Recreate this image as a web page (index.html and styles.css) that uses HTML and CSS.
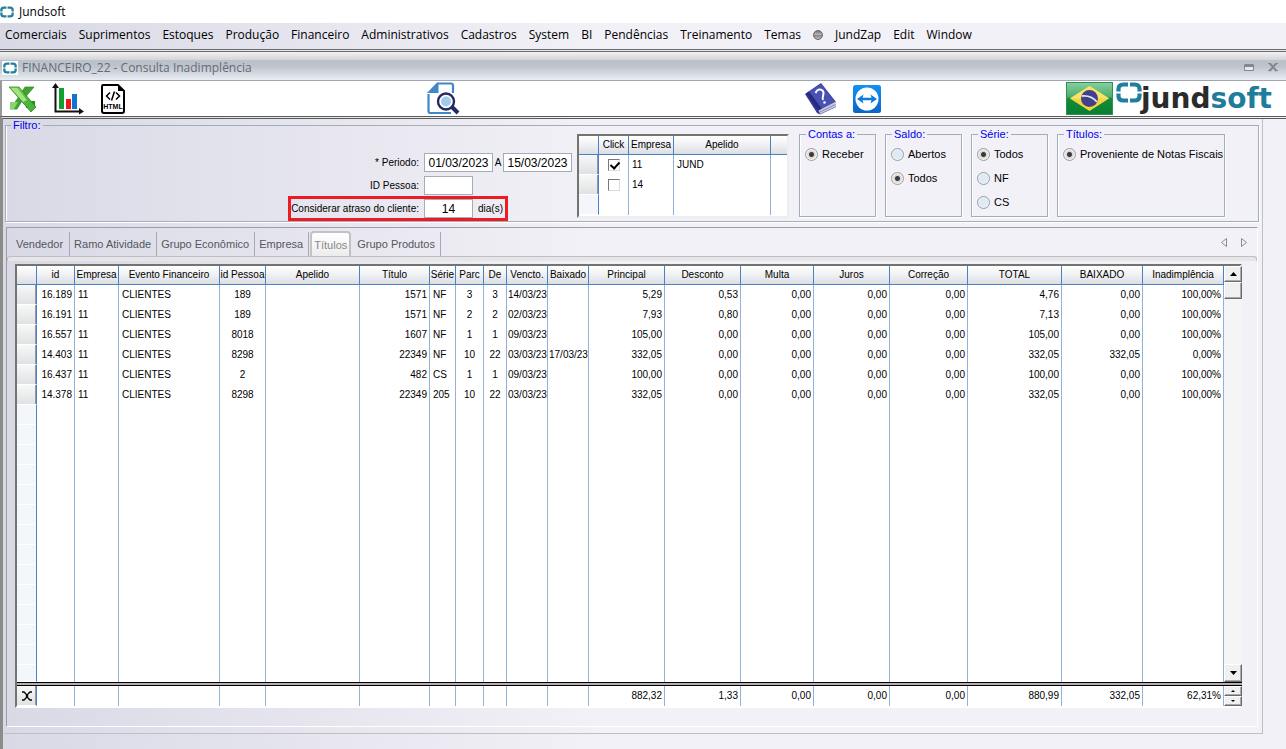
FILE: index.html
```html
<!DOCTYPE html>
<html lang="pt-BR">
<head>
<meta charset="utf-8">
<title>Jundsoft</title>
<link rel="stylesheet" href="styles.css">
</head>
<body>
<svg class="defs" width="0" height="0" aria-hidden="true">
  <symbol id="mark" viewBox="0 0 26 21">
    <path d="M12 2.500H7.500Q2.500 2.500 2.500 7V9.500M14 2.500h4.500Q23.500 2.500 23.500 7V9.500M2.500 11.500V14Q2.500 18.500 7.500 18.500H12M23.500 11.500V14Q23.500 18.500 18.500 18.500H14" fill="none" stroke="#1f7f9e" stroke-width="4.200"/>
  </symbol>
</svg>
<div class="app">
  <header class="titlebar">
    <svg class="mark" aria-hidden="true"><use href="#mark"/></svg>
    <span>Jundsoft</span>
  </header>
  <nav class="menubar">
    <button>Comerciais</button><button>Suprimentos</button><button>Estoques</button><button>Produção</button><button>Financeiro</button><button>Administrativos</button><button>Cadastros</button><button>System</button><button>BI</button><button>Pendências</button><button>Treinamento</button><button>Temas</button><button class="zap"><i class="dot"></i>JundZap</button><button>Edit</button><button>Window</button>
  </nav>
  <div class="caption">
    <svg class="mark boxed" aria-hidden="true"><use href="#mark"/></svg>
    <h1>FINANCEIRO_22 - Consulta Inadimplência</h1>
    <button class="winbtn" aria-label="Restaurar"><svg width="10" height="8"><path d="M.5.500h9v6h-9zM.500 1.500h9M.500 2.500h9" fill="#e6e8ec" stroke="#85878b"/></svg></button>
    <button class="winbtn" aria-label="Fechar"><svg width="10" height="9"><path d="M1.500 0l7 8M8.500 0l-7 8" stroke="#85878b" stroke-width="2"/><path d="M0 .5h3M7 .5h3M0 7.500h3M7 7.500h3" stroke="#85878b"/></svg></button>
  </div>
  <div class="toolbar">
    <button aria-label="Exportar para Excel" class="t-excel"><svg width="30" height="30" viewBox="0 0 30 30">
      <defs><linearGradient id="xg" x1="0" y1="0" x2="1" y2="1"><stop offset="0" stop-color="#8fd968"/><stop offset=".5" stop-color="#4db53a"/><stop offset="1" stop-color="#45b636"/></linearGradient></defs>
      <path d="M17 3h9L14 17l-5 8H2l8-11z" fill="#43a233" stroke="#2c8a2a" stroke-width=".7"/>
      <path d="M2 18h8l-4 7H2z" fill="#8bd36b"/><path d="M18 17h9v7h-9z" fill="#2f8c28"/>
      <path d="M1 3h10l17 20-5 5z" fill="url(#xg)" stroke="#237a22" stroke-width=".7"/>
      <path d="M3 4h6l10 12-4 2z" fill="#a5e37f"/>
    </svg></button>
    <button aria-label="Gráfico" class="t-chart"><svg width="32" height="32" viewBox="0 0 32 32">
      <path d="M7 5h5v21H7z" fill="#12a12b"/><path d="M14 16h5v10h-5z" fill="#f01818"/><path d="M20 11h5v15h-5z" fill="#1173d4"/>
      <path d="M3.500 3v25.500H28" fill="none" stroke="#111" stroke-width="2"/><path d="M0 5l3.500-5L7 5zM27 25l5 3.500-5 3z" fill="#111"/>
    </svg></button>
    <button aria-label="Exportar para HTML" class="t-html"><svg width="24" height="30" viewBox="0 0 24 30">
      <path d="M2 1h15l6 6v20q0 2-2 2H3q-2 0-2-2V3q0-2 1-2z" fill="#fff" stroke="#000" stroke-width="2"/><path d="M17 1l6 6h-6z"/>
      <path d="M9 8.500L5.500 12 9 15.500M15 8.500l3.500 3.500L15 15.500M13.500 7.500l-3 9" fill="none" stroke="#000" stroke-width="1.500"/>
      <text x="12" y="25" class="html-tag">HTML</text>
    </svg></button>
    <button aria-label="Consultar" class="t-search"><svg width="33" height="33" viewBox="0 0 33 33">
      <path d="M11 1.500h13q2 0 2 2V11M1.500 12v17q0 2 2 2H24" fill="none" stroke="#4086c8" stroke-width="2.200"/><path d="M0 11L10 .5h1.500V11z" fill="#4086c8"/>
      <path d="M24 24l7 7" stroke="#252a66" stroke-width="4"/><circle cx="19" cy="19.500" r="8" fill="#fff" stroke="#252a66" stroke-width="2.400"/><circle cx="19" cy="19.500" r="5" fill="#a3cbe8"/>
    </svg></button>
    <button aria-label="Ajuda" class="t-help"><svg width="32" height="32" viewBox="0 0 32 32">
      <path d="M0 11L16 0l15 19v5L15 31.500 12 30z" fill="#34389a"/><path d="M1 10.500L16 1l14 18-15 8z" fill="#4a51b4"/><path d="M1 10.500l3-2L17 26l-3 2z" fill="#262b7c"/>
      <path d="M13.500 27.500L31 18.500v5L15 31z" fill="#c9cbe0"/><path d="M14 29.500l16.500-8" stroke="#888cae" fill="none"/>
      <path d="M10.500 10Q13 4.500 17.500 7.500c3 3-1 5.500.5 9.500" fill="none" stroke="#fff" stroke-width="2"/><circle cx="19.500" cy="19.500" r="1.300" fill="#fff"/>
    </svg></button>
    <button aria-label="Acesso remoto" class="t-remote"><svg width="28" height="28" viewBox="0 0 28 28">
      <defs><linearGradient id="tg" x1="0" y1="0" x2="0" y2="1"><stop offset="0" stop-color="#1193f2"/><stop offset="1" stop-color="#0865c9"/></linearGradient></defs>
      <rect width="28" height="28" rx="2.500" fill="url(#tg)"/><circle cx="14" cy="14" r="11.500" fill="#fff"/><path d="M4 14l6.500-4.500-1 3.200h9l-1-3.200L24 14l-6.500 4.500 1-3.200h-9l1 3.200z" fill="#0d7ade"/>
    </svg></button>
    <div class="brand">
      <svg width="47" height="33" viewBox="0 0 47 33" role="img" aria-label="Brasil">
        <defs><linearGradient id="fg" x1="0" y1="0" x2="0" y2="1"><stop offset="0" stop-color="#86cf9f"/><stop offset=".45" stop-color="#4fae6e"/><stop offset=".5" stop-color="#188a3c"/><stop offset="1" stop-color="#077f30"/></linearGradient></defs>
        <rect x=".5" y=".5" width="46" height="32" fill="url(#fg)" stroke="#2f9150"/><path d="M4 16.500L23.500 4 43 16.500 23.500 29z" fill="#f1d63f"/><path d="M4 16.500L23.500 4 43 16.500z" fill="#f6e370"/><circle cx="23.500" cy="16.500" r="8.500" fill="#40408c"/><path d="M16 14q9-1 15 6" fill="none" stroke="#dfe0ee" stroke-width="1.800"/>
      </svg>
      <svg class="logo-mark" aria-hidden="true"><use href="#mark"/></svg>
      <span class="logo">jund<b>soft</b></span>
    </div>
  </div>

  <main class="form">
    <div class="panel">
      <fieldset class="group filter">
        <legend>Filtro:</legend>
        <div class="fields">
          <div class="field"><label for="d1">* Periodo:</label><input id="d1" class="date" value="01/03/2023"><label class="to" for="d2">A</label><input id="d2" class="date" value="15/03/2023"></div>
          <div class="field"><label for="pid">ID Pessoa:</label><input id="pid" class="short"></div>
          <div class="field marked"><label for="late">Considerar atraso do cliente:</label><input id="late" class="short" value="14"><span class="days">dia(s)</span></div>
        </div>
        <div class="picker">
          <table>
            <colgroup><col class="p0"><col class="p1"><col class="p2"><col class="p3"><col class="p4"></colgroup>
            <thead><tr><th></th><th>Click</th><th>Empresa</th><th>Apelido</th><th></th></tr></thead>
            <tbody>
              <tr><td></td><td class="c"><input type="checkbox" aria-label="Empresa 11" checked></td><td>11</td><td>JUND</td><td></td></tr>
              <tr><td></td><td class="c"><input type="checkbox" aria-label="Empresa 14"></td><td>14</td><td></td><td></td></tr>
              <tr class="rest"><td></td><td></td><td></td><td></td><td></td></tr>
            </tbody>
          </table>
        </div>
        <fieldset class="group opts"><legend>Contas a:</legend>
          <label><input type="radio" name="contas" checked>Receber</label></fieldset>
        <fieldset class="group opts"><legend>Saldo:</legend>
          <label><input type="radio" name="saldo">Abertos</label><label><input type="radio" name="saldo" checked>Todos</label></fieldset>
        <fieldset class="group opts"><legend>Série:</legend>
          <label><input type="radio" name="serie" checked>Todos</label><label><input type="radio" name="serie">NF</label><label><input type="radio" name="serie">CS</label></fieldset>
        <fieldset class="group opts wide"><legend>Títulos:</legend>
          <label><input type="radio" name="titulos" checked>Proveniente de Notas Fiscais</label></fieldset>
      </fieldset>

      <section class="tabs">
        <div class="tablist">
          <button>Vendedor</button><button>Ramo Atividade</button><button>Grupo Econômico</button><button>Empresa</button><button class="active">Títulos</button><button>Grupo Produtos</button>
          <span class="arrows">
            <button aria-label="Anterior"><svg width="7" height="9"><path d="M5.500.5v8l-5-4z" fill="none" stroke="#8b8b90"/></svg></button>
            <button aria-label="Próximo"><svg width="7" height="9"><path d="M.5.500v8l5-4z" fill="none" stroke="#8b8b90"/></svg></button>
          </span>
        </div>
        <div class="strip"></div>
        <div class="grid">
          <table class="data">
            <colgroup><col class="w20"><col class="w38"><col class="w44"><col class="w101"><col class="w46"><col class="w94"><col class="w70"><col class="w26"><col class="w28"><col class="w23"><col class="w41"><col class="w41"><col class="w76"><col class="w76"><col class="w73"><col class="w76"><col class="w78"><col class="w94"><col class="w81"><col class="w81"></colgroup>
            <thead><tr><th></th><th>id</th><th>Empresa</th><th>Evento Financeiro</th><th>id Pessoa</th><th>Apelido</th><th>Título</th><th>Série</th><th>Parc</th><th>De</th><th>Vencto.</th><th>Baixado</th><th>Principal</th><th>Desconto</th><th>Multa</th><th>Juros</th><th>Correção</th><th>TOTAL</th><th>BAIXADO</th><th>Inadimplência</th></tr></thead>
            <tbody>
              <tr><td></td><td class="r">16.189</td><td>11</td><td>CLIENTES</td><td class="c">189</td><td></td><td class="r">1571</td><td>NF</td><td class="c">3</td><td class="c">3</td><td class="d">14/03/23</td><td class="d"></td><td class="r">5,29</td><td class="r">0,53</td><td class="r">0,00</td><td class="r">0,00</td><td class="r">0,00</td><td class="r">4,76</td><td class="r">0,00</td><td class="r">100,00%</td></tr>
              <tr><td></td><td class="r">16.191</td><td>11</td><td>CLIENTES</td><td class="c">189</td><td></td><td class="r">1571</td><td>NF</td><td class="c">2</td><td class="c">2</td><td class="d">02/03/23</td><td class="d"></td><td class="r">7,93</td><td class="r">0,80</td><td class="r">0,00</td><td class="r">0,00</td><td class="r">0,00</td><td class="r">7,13</td><td class="r">0,00</td><td class="r">100,00%</td></tr>
              <tr><td></td><td class="r">16.557</td><td>11</td><td>CLIENTES</td><td class="c">8018</td><td></td><td class="r">1607</td><td>NF</td><td class="c">1</td><td class="c">1</td><td class="d">09/03/23</td><td class="d"></td><td class="r">105,00</td><td class="r">0,00</td><td class="r">0,00</td><td class="r">0,00</td><td class="r">0,00</td><td class="r">105,00</td><td class="r">0,00</td><td class="r">100,00%</td></tr>
              <tr><td></td><td class="r">14.403</td><td>11</td><td>CLIENTES</td><td class="c">8298</td><td></td><td class="r">22349</td><td>NF</td><td class="c">10</td><td class="c">22</td><td class="d">03/03/23</td><td class="d">17/03/23</td><td class="r">332,05</td><td class="r">0,00</td><td class="r">0,00</td><td class="r">0,00</td><td class="r">0,00</td><td class="r">332,05</td><td class="r">332,05</td><td class="r">0,00%</td></tr>
              <tr><td></td><td class="r">16.437</td><td>11</td><td>CLIENTES</td><td class="c">2</td><td></td><td class="r">482</td><td>CS</td><td class="c">1</td><td class="c">1</td><td class="d">09/03/23</td><td class="d"></td><td class="r">100,00</td><td class="r">0,00</td><td class="r">0,00</td><td class="r">0,00</td><td class="r">0,00</td><td class="r">100,00</td><td class="r">0,00</td><td class="r">100,00%</td></tr>
              <tr><td></td><td class="r">14.378</td><td>11</td><td>CLIENTES</td><td class="c">8298</td><td></td><td class="r">22349</td><td>205</td><td class="c">10</td><td class="c">22</td><td class="d">03/03/23</td><td class="d"></td><td class="r">332,05</td><td class="r">0,00</td><td class="r">0,00</td><td class="r">0,00</td><td class="r">0,00</td><td class="r">332,05</td><td class="r">0,00</td><td class="r">100,00%</td></tr>
              <tr class="rest"><td></td><td></td><td></td><td></td><td></td><td></td><td></td><td></td><td></td><td></td><td></td><td></td><td></td><td></td><td></td><td></td><td></td><td></td><td></td><td></td></tr>
            </tbody>
          </table>
          <div class="scroll">
            <button aria-label="Subir"><svg width="7" height="4"><path d="M0 4l3.500-4L7 4z"/></svg></button>
            <div class="thumb"></div>
            <button class="down" aria-label="Descer"><svg width="7" height="4"><path d="M0 0h7L3.500 4z"/></svg></button>
          </div>
          <div class="splitter"></div>
          <table class="data totals">
            <colgroup><col class="w20"><col class="w38"><col class="w44"><col class="w101"><col class="w46"><col class="w94"><col class="w70"><col class="w26"><col class="w28"><col class="w23"><col class="w41"><col class="w41"><col class="w76"><col class="w76"><col class="w73"><col class="w76"><col class="w78"><col class="w94"><col class="w81"><col class="w81"></colgroup>
            <tbody><tr><td><svg width="10" height="10"><path d="M0 1h2l2.500 2.500v3L2 9H0M10 1H8L5.500 3.500v3L8 9h2" fill="none" stroke="#000" stroke-width="1.300"/></svg></td><td></td><td></td><td></td><td></td><td></td><td></td><td></td><td></td><td></td><td></td><td></td><td class="r">882,32</td><td class="r">1,33</td><td class="r">0,00</td><td class="r">0,00</td><td class="r">0,00</td><td class="r">880,99</td><td class="r">332,05</td><td class="r">62,31%</td></tr></tbody>
          </table>
          <div class="spin">
            <button aria-label="Anterior"><svg width="4" height="2"><path d="M0 2l2-2 2 2z"/></svg></button>
            <button aria-label="Próximo"><svg width="4" height="2"><path d="M0 0h4L2 2z"/></svg></button>
          </div>
        </div>
      </section>
    </div>
  </main>
</div>
</body>
</html>
```
FILE: styles.css
```css
:root {
  --ui: "Open Sans", "Noto Sans", sans-serif;
  --form: "Liberation Sans", Arial, sans-serif;
  --edge: #a3adb8;
  --blue: #4a80c4;
  --line: #94b2d8;
}
* { box-sizing: border-box; }
body { margin: 0; font: 12px/16px var(--ui); color: #000; }
button { border: 0; padding: 0; margin: 0; background: none; font: inherit; color: inherit; }
svg { display: block; }
.defs { position: absolute; }
.app { min-height: 100vh; display: flex; flex-direction: column; background: linear-gradient(90deg, #d9d9e6, #f2f1f7 600px); }

.titlebar { height: 23px; display: flex; align-items: center; gap: 5px; background: #fff; }
.mark { width: 14px; height: 12px; }
.boxed { width: 16px; height: 14px; padding: 1px; background: #fff; }
.menubar { height: 26px; display: flex; align-items: center; gap: 12px; padding: 0 5px 2px; }
.zap { display: flex; align-items: center; gap: 12px; }
.dot { width: 10px; height: 10px; border-radius: 50%; border: 1px solid #666; background: linear-gradient(#777, #bbb 50%, #888 55%, #bbb); }
.caption {
  height: 32px; display: flex; align-items: center; gap: 4px; padding: 3px 8px 0 2px;
  border-top: 3px double #6b6b68; border-bottom: 1px solid #a0a5b2; color: #656b76;
  background: linear-gradient(#f2f2f2, #d3d4d8 8px, #b9c1c9 8px, #bcc3cb 14px, #e9edf4);
}
.caption h1 { flex: 1; margin: 0; font-size: 12px; line-height: 16px; font-weight: 400; }
.winbtn { margin-left: 10px; }

.toolbar { height: 35px; display: flex; align-items: center; background: #fff; border-left: 2px solid #999; padding: 0 14px 0 6px; }
.t-chart { margin-left: 14px; }
.t-html { margin-left: 17px; }
.t-search { margin-left: 302px; }
.t-help { margin-left: 345px; }
.t-remote { margin-left: 16px; }
.html-tag { font: bold 7px "Liberation Sans", sans-serif; text-anchor: middle; }
.brand { margin-left: auto; display: flex; align-items: center; }
.logo-mark { width: 26px; height: 21px; margin: 0 -1px 0 3px; align-self: flex-start; }
.logo { font: bold 28px/33px "DejaVu Sans", sans-serif; color: #2b2b2b; }
.logo b { color: #1f7c9a; }

.form { flex: 1; padding: 0 23px 15px 1px; border-top: 3px double #5c5c5a; border-left: 3px solid #8b8b88; }
.panel { padding: 0 3px 6px 1px; border-right: 1px solid #c0c0c4; border-bottom: 1px solid #c0c0c4; }
.group { min-width: 0; margin: 0; padding: 0; border: 1px solid var(--edge); box-shadow: 1px 1px #fff, inset 1px 0 #fff; }
.group legend { margin-left: 5px; padding: 0 2px; color: #0000f0; font: 11px/13px var(--form); }
.filter { display: flex; align-items: flex-start; height: 103px; }
.fields { display: flex; flex-direction: column; gap: 4px; margin: 21px 0 0 285px; font: 10px/19px var(--form); }
.field { display: flex; height: 19px; }
.field label:first-child { width: 128px; text-align: right; margin-right: 5px; white-space: nowrap; }
.field input { height: 19px; border: 1px solid var(--edge); background: #fff; padding: 0; text-align: center; font: 12px/17px var(--form); }
.date { width: 69px; }
.short { width: 49px; }
.field .to { width: 10px; text-align: center; }
.days { margin-left: 5px; }
.marked { align-self: flex-start; padding-right: 2px; outline: 3px solid #ed1c24; }
.picker { width: 212px; height: 84px; margin: 2px 10px 0 5px; border: 2px solid; border-color: #74746f #eee #eee #74746f; background: #fff; }
table { border-collapse: separate; border-spacing: 0; table-layout: fixed; width: 100%; font: 10px/20px var(--form); }
th, td { height: 20px; padding: 0 3px; font-weight: 400; text-align: left; white-space: nowrap; overflow: hidden; border-right: 1px solid var(--line); }
th { height: 19px; line-height: 18px; text-align: center; padding: 0; border-right-color: var(--blue); border-bottom: 1px solid var(--blue); background: linear-gradient(#fff, #eff0f3 50%, #dcdee2); }
td:first-child { border-right-color: var(--blue); background: linear-gradient(#f8f8f8, #dfe1e4); border-bottom: 1px solid #fff; box-shadow: inset -1px 0 #999; }
.rest td:first-child { background: repeating-linear-gradient(#f3f7fc 0 19px, #fff 19px 20px); box-shadow: none; }
td.r { text-align: right; padding: 0 2px; }
td.c { text-align: center; }
td.d { padding: 0 0 0 1px; }
.picker th:last-child, .picker td:last-child { border-right: 0; }
.p0 { width: 20px; } .p1 { width: 30px; } .p2 { width: 45px; } .p3 { width: 97px; } .p4 { width: 16px; }
input[type=checkbox] { appearance: none; display: block; width: 12px; height: 12px; margin: 0 auto; border: 1px solid; border-color: #777 #ddd #ddd #777; background: #fff; }
input[type=checkbox]:checked::before { content: ""; display: block; width: 4px; height: 7px; margin: 0 3px; border: solid #000; border-width: 0 2px 2px 0; transform: rotate(42deg); }

.opts { width: 77px; height: 89px; margin: -4px 9px 0 0; padding: 0 0 0 5px; font: 11px/16px var(--form); }
.opts.wide { width: 168px; }
.opts legend { margin-left: 1px; }
.opts label { display: flex; align-items: center; gap: 4px; margin: 5px 0 8px; height: 16px; white-space: nowrap; }
input[type=radio] { appearance: none; flex: none; width: 13px; height: 13px; margin: 0; border: 1px solid #93a0ac; border-radius: 50%; background: #dfeaf4; box-shadow: inset 0 0 0 1px #f2f4f6; }
input[type=radio]:checked { background: radial-gradient(circle, #2f3b55 0 2px, #ecd2bb 3px, #e8e3e0 5px); }

.tabs { margin: 5px 1px 0; border: 1px solid; border-color: #9d9da5 #fff #fff #9d9da5; padding-bottom: 18px; }
.tablist { display: flex; align-items: flex-end; height: 28px; padding-left: 4px; font: 11px/16px var(--form); color: #55565c; }
.tablist > button { height: 24px; padding: 0 5px 0 4px; border-right: 1px solid #a8a8b0; }
.tablist > button:first-child { padding: 0 6px 0 5px; }
.tablist > .active { height: 25px; padding: 0 2px; margin: 0 2px 0 1px; border: 2px solid #c2c2c4; border-bottom: 0; border-radius: 4px 4px 0 0; background: linear-gradient(#fff, #ececec); color: #888; }
.arrows { margin-left: auto; display: flex; gap: 13px; align-self: center; padding-right: 9px; }
.strip { height: 5px; border: 1px solid #bdbdc2; border-bottom: 0; border-radius: 3px 3px 0 0; background: #e6e6e9; }
.grid { display: grid; grid-template-columns: 1fr 18px; margin: 3px 15px 0 8px; border: 2px solid; border-color: #74746f #eee #fff #74746f; background: #fff; }
.data .rest td { height: calc(100vh - 472px); }
.splitter { grid-column: 1 / -1; height: 4px; border: solid #000; border-width: 1px 0; background: #b5aeb2; }
.scroll { display: flex; flex-direction: column; background: #f5f5f5; }
.scroll button, .thumb, .spin button { display: grid; place-items: center; height: 16px; background: #f0f0f0; border: 1px solid; border-color: #fff #6b6b6b #6b6b6b #fff; box-shadow: inset -1px -1px #aaa; }
.thumb { height: 17px; }
.scroll .down { margin-top: auto; height: 18px; }
.spin button { height: 10px; width: 100%; }
.totals td:first-child svg { margin: 0 auto; }
.w20 { width: 20px; } .w23 { width: 23px; } .w26 { width: 26px; } .w28 { width: 28px; } .w38 { width: 38px; } .w41 { width: 41px; } .w44 { width: 44px; } .w46 { width: 46px; } .w70 { width: 70px; } .w73 { width: 73px; } .w76 { width: 76px; } .w78 { width: 78px; } .w81 { width: 81px; } .w94 { width: 94px; } .w101 { width: 101px; }
```
